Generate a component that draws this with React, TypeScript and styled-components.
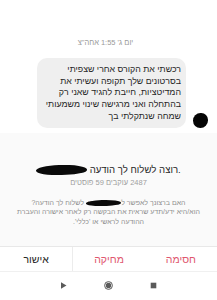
import React from "react";
import styled, { createGlobalStyle } from "styled-components";

const Global = createGlobalStyle`
  html, body { margin: 0; padding: 0; background: #ffffff; }
  body { font-family: "Liberation Sans", "DejaVu Sans", Arial, sans-serif; }
  * { box-sizing: border-box; }
`;

const Page = styled.div`
  width: 217px;
  height: 300px;
  display: flex;
  flex-direction: column;
  overflow: hidden;
`;

const Conversation = styled.div`
  background: #ffffff;
  padding: 38px 0 5px;
  display: flex;
  flex-direction: column;
`;

const Timestamp = styled.div`
  font-size: 7.5px;
  line-height: 10px;
  color: #9a9a9a;
  text-align: center;
  padding-right: 6px;
`;

const MessageRow = styled.div`
  margin-top: 10px;
  display: flex;
  flex-direction: row-reverse;
  align-items: flex-end;
  gap: 7px;
  padding-right: 9px;
`;

const Avatar = styled.div`
  width: 15px;
  height: 15px;
  border-radius: 50% 45% 50% 48%;
  background: #050505;
  flex-shrink: 0;
`;

const Bubble = styled.div`
  width: 149px;
  background: #efefef;
  border-radius: 10px;
  padding: 6px 5px 5px 6px;
  font-size: 8.8px;
  line-height: 11.7px;
  color: #262626;
  text-align: right;
  white-space: nowrap;
`;

const Dialog = styled.div`
  background: #fafafa;
  padding: 30px 0 20px;
  display: flex;
  flex-direction: column;
  align-items: center;
  text-align: center;
`;

const Heading = styled.div`
  font-size: 9.6px;
  line-height: 13px;
  color: #262626;
  white-space: nowrap;
`;

const Redacted = styled.span<{ $small?: boolean }>`
  position: relative;
  padding: ${(p) => (p.$small ? "0 2px" : "0 4px")};
  &::after {
    content: "";
    position: absolute;
    left: 0;
    right: 0;
    top: 1px;
    bottom: 0;
    background: #0a0a0a;
    border-radius: 50% 60% 45% 55%;
    transform: rotate(-2deg);
  }
`;

const Counts = styled.div`
  margin-top: 2px;
  font-size: 7.5px;
  line-height: 9px;
  color: #a0a0a0;
`;

const Notice = styled.div`
  margin-top: 11px;
  font-size: 7px;
  line-height: 9.5px;
  color: #8e8e8e;
  white-space: nowrap;
`;

const Actions = styled.div`
  display: grid;
  grid-template-columns: repeat(3, 1fr);
  direction: rtl;
  border-top: 1px solid #e8e8e8;
  border-bottom: 1px solid #f0f0f0;
  background: #ffffff;
  height: 26px;
`;

const ActionButton = styled.div<{ $danger?: boolean; $divider?: boolean }>`
  display: flex;
  align-items: center;
  justify-content: center;
  font-size: 10.5px;
  color: ${(p) => (p.$danger ? "#e0566e" : "#262626")};
  border-left: ${(p) => (p.$divider ? "1px solid #ececec" : "none")};
`;

const NavBar = styled.div`
  flex: 1;
  background: #ffffff;
  display: flex;
  align-items: center;
  justify-content: center;
  gap: 36px;
  padding-bottom: 1px;
`;

const NavIcon = styled.svg`
  width: 9px;
  height: 9px;
  display: block;
`;

export default function App() {
  return (
    <>
      <Global />
      <Page>
        <Conversation>
          <Timestamp dir="rtl">יום ג' 1:55 אחה"צ</Timestamp>
          <MessageRow>
            <Avatar />
            <Bubble dir="rtl">
              רכשתי את הקורס אחרי שצפיתי
              <br />
              בסרטונים שלך תקופה ועשיתי את
              <br />
              המדיטציות, חייבת להגיד שאני רק
              <br />
              בהתחלה ואני מרגישה שינוי משמעותי
              <br />
              שמחה שנתקלתי בך
            </Bubble>
          </MessageRow>
        </Conversation>
        <Dialog>
          <Heading dir="ltr">
            <Redacted>username</Redacted> רוצה לשלוח לך הודעה.
          </Heading>
          <Counts dir="rtl">2487 עוקבים 59 פוסטים</Counts>
          <Notice dir="rtl">
            האם ברצונך לאפשר ל<Redacted $small>username</Redacted> לשלוח לך הודעה?
            <br />
            הוא/היא ידע/תדע שראית את הבקשה רק לאחר אישורה והעברת
            <br />
            ההודעה לראשי או 'כללי'.
          </Notice>
        </Dialog>
        <Actions>
          <ActionButton $danger>חסימה</ActionButton>
          <ActionButton $danger $divider>מחיקה</ActionButton>
          <ActionButton>אישור</ActionButton>
        </Actions>
        <NavBar>
          <NavIcon viewBox="0 0 9 9">
            <path d="M2 1.2 L7.5 4.5 L2 7.8 Z" fill="#5a5a5a" />
          </NavIcon>
          <NavIcon viewBox="0 0 9 9">
            <circle cx="4.5" cy="4.5" r="3.9" fill="none" stroke="#5a5a5a" strokeWidth="1" />
            <circle cx="4.5" cy="4.5" r="2.7" fill="#5a5a5a" />
          </NavIcon>
          <NavIcon viewBox="0 0 9 9">
            <rect x="1.7" y="1.7" width="5.6" height="5.6" fill="#5a5a5a" />
          </NavIcon>
        </NavBar>
      </Page>
    </>
  );
}
